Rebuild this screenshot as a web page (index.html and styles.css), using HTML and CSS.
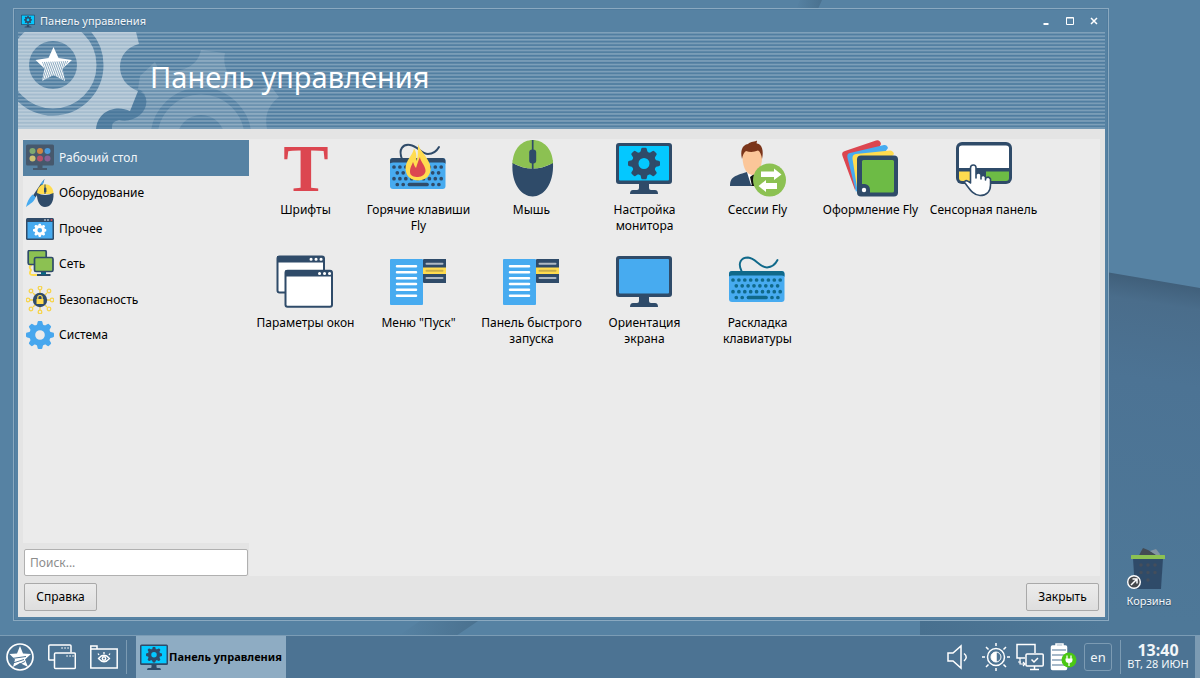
FILE: index.html
```html
<!DOCTYPE html>
<html lang="ru">
  <head>
    <meta charset="UTF-8" />
    <meta name="viewport" content="width=device-width, initial-scale=1.0" />
    <link rel="stylesheet" href="styles.css">
    <title>Панель управления</title>
  </head>
  <body>
    <!-- shared icon parts -->
    <svg class="defs" aria-hidden="true">
      <symbol id="gear" viewBox="-16 -16 32 32">
        <circle r="8.8" fill="none" stroke="currentColor" stroke-width="6.6" />
        <g fill="currentColor">
          <path id="teeth" d="M-4.5-10.5Q-3-12-2.8-14.5Q-2.6-16-1.5-16H1.5Q2.6-16 2.8-14.5Q3-12 4.5-10.5ZM-4.5 10.5Q-3 12-2.8 14.5Q-2.6 16-1.5 16H1.5Q2.6 16 2.8 14.5Q3 12 4.5 10.5Z" />
          <use href="#teeth" transform="rotate(45)" />
          <use href="#teeth" transform="rotate(90)" />
          <use href="#teeth" transform="rotate(135)" />
        </g>
      </symbol>
      <symbol id="monitor" viewBox="0 0 56 56">
        <rect y="3" width="56" height="41" rx="3" fill="#2f4b69" />
        <path d="M23 43H33V48Q33 50 35 50H39Q42 50 42 54H14Q14 50 17 50H21Q23 50 23 48Z" fill="#2f4b69" />
        <rect x="3" y="6" width="50" height="34.5" rx="1" fill="currentColor" />
      </symbol>
      <symbol id="monitor-gear" viewBox="0 0 56 56">
        <use href="#monitor" width="56" height="56" color="#04c8ff" />
        <use href="#gear" x="12" y="7.5" width="32" height="32" color="#2f4b69" />
      </symbol>
      <symbol id="keys" viewBox="0 0 56 56">
        <rect y="18" width="55.5" height="31" rx="3" fill="#47abf0" />
        <path d="M0 24V21Q0 18 3 18H52.500Q55.500 18 55.500 21V24Q55.500 22.500 53 22.500H3Q0 22.500 0 24Z" fill="currentColor" />
        <g fill="none" stroke="currentColor" stroke-width="3.7" stroke-linecap="round">
          <path d="M4 27H51.500M4 38.700H51.500" stroke-dasharray="0 5.900" />
          <path d="M7.300 32.800H49M7.300 44.500H14M43 44.500H49.500" stroke-dasharray="0 5.900" />
          <path d="M19.500 44.500H37" />
        </g>
      </symbol>
      <symbol id="menu" viewBox="0 0 56 56">
        <rect y="6" width="33" height="46" rx="1" fill="#47abf0" />
        <path d="M7 13.300H26M7 19.200H26M7 25.200H26M7 31H26M7 36.800H26M7 42.700H26" stroke="#fff" stroke-width="2.500" stroke-linecap="round" />
        <rect x="33" y="6" width="23.500" height="24" rx="1" fill="#2f4b69" />
        <rect x="33" y="14.500" width="23.500" height="6.500" fill="#ffdc4f" />
        <path d="M36.500 10.700H52.500M36.500 25H52.500" stroke="#aeb9c3" stroke-width="2" stroke-linecap="round" />
        <path d="M36.500 17.800H52.500" stroke="#c9ae4a" stroke-width="2" stroke-linecap="round" />
      </symbol>
    </svg>

    <div class="desktop">
      <svg class="wallpaper" viewBox="0 0 1200 678" preserveAspectRatio="none" aria-hidden="true">
        <defs>
          <linearGradient id="edge" gradientUnits="userSpaceOnUse" x1="1150" y1="279" x2="1100" y2="610">
            <stop offset="0" stop-color="#405f7a" />
            <stop offset="0.07" stop-color="#4a6d8b" />
            <stop offset="0.3" stop-color="#4c7394" />
            <stop offset="1" stop-color="#4e7898" />
          </linearGradient>
          <linearGradient id="fold">
            <stop offset="0" stop-color="#48708f" />
            <stop offset="1" stop-color="#4e7898" />
          </linearGradient>
          <linearGradient id="crease">
            <stop offset="0" stop-color="#4a718f" stop-opacity="0" />
            <stop offset="1" stop-color="#4a718f" />
          </linearGradient>
        </defs>
        <rect width="1200" height="678" fill="#5682a3" />
        <path d="M800 0H822L818 9H796Z" fill="url(#crease)" />
        <path d="M420 621H478L456 636H398Z" fill="url(#crease)" />
        <path d="M1100 271L1200 288V678H1100Z" fill="url(#edge)" />
        <path d="M920 610H1101V678H920Z" fill="url(#fold)" />
      </svg>

      <main class="window">
        <header class="titlebar">
          <svg class="titlebar-icon"><use href="#monitor-gear" /></svg>
          <span class="titlebar-text">Панель управления</span>
          <button class="title-button" aria-label="Свернуть">
            <svg viewBox="0 0 10 10"><path d="M2.500 8H7.500" stroke-width="2" /></svg>
          </button>
          <button class="title-button" aria-label="Развернуть">
            <svg viewBox="0 0 10 10"><path d="M1.500 1.500H8.500V8.500H1.500ZM1.500 2H8.500" /></svg>
          </button>
          <button class="title-button" aria-label="Закрыть окно">
            <svg viewBox="0 0 10 10"><path d="M2 2L8 8M8 2L2 8" stroke-width="1.500" /></svg>
          </button>
        </header>

        <div class="banner">
          <svg class="banner-art" aria-hidden="true">
            <defs>
              <pattern id="stripes" width="8" height="3.53" patternUnits="userSpaceOnUse">
                <rect y="0" width="8" height="1.500" fill="#8eacc2" fill-opacity="0.75" />
                <rect y="1.900" width="8" height="1" fill="#44749a" fill-opacity="0.4" />
              </pattern>
              <pattern id="hatch" width="2" height="8" patternUnits="userSpaceOnUse" patternTransform="rotate(-20)">
                <rect width="0.700" height="8" fill="#5682a3" />
              </pattern>
              <mask id="front-mask">
                <rect width="300" height="97" fill="#fff" />
                <circle cx="35" cy="33" r="47" fill="none" stroke="#000" stroke-width="7" />
                <circle cx="35" cy="33" r="24" fill="#000" />
              </mask>
              <mask id="back-mask">
                <rect width="300" height="97" fill="#fff" />
                <circle cx="183" cy="106" r="47" fill="none" stroke="#000" stroke-width="7" />
                <circle cx="183" cy="107" r="24" fill="#000" />
              </mask>
            </defs>
            <rect width="100%" height="100%" fill="url(#stripes)" />
            <!-- back gear -->
            <g mask="url(#back-mask)">
              <path d="M94 97C94 90 95 90 101 88C108 90 116 88 123 82C131 74 130 60 120 57L122 44L137 30L140 36C158 42 179 38 183 18L207 21C203 38 216 55 236 58C244 58 248 55 252 53L261 65C248 75 247 86 249 97Z" fill="#fff" fill-opacity="0.14" />
            </g>
            <!-- front gear with its shadow -->
            <path d="M120 59L112 79C100 73 80 77 78 97H94C94 90 95 90 101 88C108 90 116 88 123 82C131 74 130 62 120 59Z" fill="#46759a" fill-opacity="0.6" />
            <g mask="url(#front-mask)">
              <path d="M0 0H118L121 12C108 15 102 25 102 35C102 46 109 55 120 59L112 79C100 73 80 77 78 97H0Z" fill="#fff" fill-opacity="0.48" />
            </g>
            <path d="M35.500 15L40.500 26L54 28L44.500 36.500L47 49L35.500 43L24 49L26.500 36.500L17.500 28L30.500 26Z" fill="#fff" />
            <path d="M24 30L51 29L44.500 36.500L47 49L35.500 43L24 49L26.500 36.500Z" fill="url(#hatch)" />
          </svg>
          <h1>Панель управления</h1>
        </div>

        <div class="panel">
          <div class="columns">
            <aside class="sidebar">
              <nav class="categories">
                <button class="category selected">
                  <svg viewBox="0 0 28 28">
                    <rect y="0.500" width="28" height="21" rx="1.500" fill="#46586c" />
                    <path d="M11.500 21H16.500V24H21V26H7V24H11.500Z" fill="#46586c" />
                    <circle cx="6.500" cy="7" r="3" fill="#7fa970" /><circle cx="14" cy="7" r="3" fill="#cf8742" /><circle cx="21.500" cy="7" r="3" fill="#4b9ada" />
                    <circle cx="6.500" cy="14.500" r="3" fill="#cdc173" /><circle cx="14" cy="14.500" r="3" fill="#b75069" /><circle cx="21.500" cy="14.500" r="3" fill="#885f95" />
                  </svg>
                  Рабочий стол
                </button>
                <button class="category">
                  <svg viewBox="0 0 28 28">
                    <path d="M18.500 0L16 8L9.500 18.500L7 16.500L14 6Z" fill="#2f4b69" />
                    <path d="M18.500 0L16.500 6L14.500 5Z" fill="#47abf0" />
                    <path d="M6.500 15.500L9.500 18C9 22 4 25 0 28C1 23 3 19 6.500 15.500Z" fill="#47abf0" />
                    <path d="M11 15C11 2 27.500 2 27.500 15Z" fill="#ffdc4f" />
                    <path d="M11 14Q19 18 27.500 14C28 24 24 28 19 28S10.500 22 11 14Z" fill="#2f4b69" />
                    <path d="M19 5.500V15" stroke="#2f4b69" /><rect x="18" y="8.500" width="2.400" height="5" rx="1.200" fill="#2f4b69" />
                  </svg>
                  Оборудование
                </button>
                <button class="category">
                  <svg viewBox="0 0 28 28">
                    <rect y="3" width="28" height="22" rx="1.500" fill="#2f4b69" />
                    <rect x="1.500" y="7" width="25" height="16.500" fill="#47abf0" />
                    <circle cx="19" cy="5" r="0.800" fill="#fff" /><circle cx="22" cy="5" r="0.800" fill="#fff" /><circle cx="25.500" cy="5" r="0.900" fill="#dc4650" />
                    <use href="#gear" x="7" y="8.500" width="13.500" height="13.500" color="#fff" />
                  </svg>
                  Прочее
                </button>
                <button class="category">
                  <svg viewBox="0 0 28 28">
                    <path d="M6 15Q2 16 5 20Q2 25 7 25H13" fill="none" stroke="#ffdc4f" stroke-width="2" />
                    <rect x="2.200" y="0.500" width="18" height="14" rx="1.500" fill="#8cc152" stroke="#2f4b69" stroke-width="1.700" />
                    <rect x="8.500" y="7.500" width="18.500" height="14" rx="1.500" fill="#8cc152" stroke="#2f4b69" stroke-width="1.700" />
                    <path d="M15 22H20V24H24.500V26H11V24H15Z" fill="#2f4b69" />
                    <path d="M15 22.500H20V24.500H15Z" fill="#006a88" />
                  </svg>
                  Сеть
                </button>
                <button class="category">
                  <svg viewBox="0 0 28 28">
                    <g fill="none" stroke="#f6d44d" stroke-width="1.300">
                      <path d="M14 4V24M4 14H24M7 7L21 21M21 7L7 21" />
                      <g fill="#ebebeb">
                        <circle cx="14" cy="2" r="1.800" /><circle cx="14" cy="26" r="1.800" /><circle cx="2" cy="14" r="1.800" /><circle cx="26" cy="14" r="1.800" />
                        <circle cx="5" cy="5" r="1.800" /><circle cx="23" cy="5" r="1.800" /><circle cx="5" cy="23" r="1.800" /><circle cx="23" cy="23" r="1.800" />
                      </g>
                    </g>
                    <circle cx="14" cy="14" r="7.200" fill="#2f4b69" />
                    <path d="M11.800 13V11.500Q11.800 9.500 14 9.500T16.200 11.500V13" fill="none" stroke="#ffdc4f" stroke-width="1.200" />
                    <rect x="10.500" y="13" width="7" height="5" rx="0.500" fill="#ffdc4f" />
                  </svg>
                  Безопасность
                </button>
                <button class="category">
                  <svg color="#47a7ee"><use href="#gear" /></svg>
                  Система
                </button>
              </nav>
              <input class="search" type="text" placeholder="Поиск..." aria-label="Поиск" />
            </aside>

            <section class="items">
              <button class="item">
                <svg viewBox="-1 0 56 56"><text class="serif-letter" x="28" y="51" text-anchor="middle">T</text></svg>
                <span>Шрифты</span>
              </button>
              <button class="item">
                <svg viewBox="0 0 56 56">
                  <path d="M12 19C8 9 13 4 20 5C28 6 31 14 38 14Q45 14 49 7" fill="none" stroke="#2f4b69" stroke-width="2" stroke-linecap="round" />
                  <use href="#keys" width="56" height="56" color="#2f4b69" />
                  <path d="M28.500 4C29 9 33 12 36 17C39 22 41 25 40.500 30C40 37 34 40.500 28 40.500S16 37 15.500 29C15.500 20 22 17 24 8.500C26 11 27 16 26 21C29 17 27 10 28.500 4Z" fill="#ffdc4f" />
                  <path d="M20 32C20 27 22 25 23 22C24 24 24 26 26 28C27 25 28 21 30 17C30 21 35 25 35.500 30C36 34 32 37 28 37S20 36 20 32Z" fill="#dc4650" />
                </svg>
                <span>Горячие клавиши Fly</span>
              </button>
              <button class="item">
                <svg viewBox="-1 0 56 56">
                  <path d="M8.500 24C9 -8 48.500 -8 49 24Z" fill="#8cc152" />
                  <path d="M8.500 23Q28.500 34 49 23C50 45 39 56.500 28.700 56.500S7 45 8.500 23Z" fill="#2f4b69" />
                  <path d="M8.700 20V23Q28.500 34 48.800 23V20Z" fill="#8cc152" />
                  <path d="M28.700 0V29" stroke="#2f4b69" stroke-width="1.700" />
                  <rect x="25.200" y="9.500" width="7" height="14" rx="3" fill="#2f4b69" />
                </svg>
                <span>Мышь</span>
              </button>
              <button class="item">
                <svg><use href="#monitor-gear" /></svg>
                <span>Настройка монитора</span>
              </button>
              <button class="item">
                <svg viewBox="-1 0 56 56">
                  <path d="M0 46C0 38 3 36 17 32L26 36L35 46Z" fill="#2f4b69" />
                  <path d="M16 29L21 45H27L26 30Z" fill="#fff" />
                  <path d="M20 37L24 34L26 46H22Z" fill="#111" />
                  <path d="M12.500 12Q22 6 32 12C33 26 29 34 22 35C15 34 12 25 12.500 12Z" fill="#fbc699" />
                  <path d="M12 19C10 11 12 5 18 4C21 1 25 2 27 0.500C27 3 26 3 27 3.500C32 4 34 11 32 19Q31 12 28 10.500Q22 13 16 11Q13 13 12 19Z" fill="#7b351a" />
                  <circle cx="39.500" cy="40" r="16.500" fill="#8cc152" />
                  <path d="M31 31.500H44V28.500L51.500 34.500L44 40V37H31ZM47 43H36V40L28.500 46L36 52V49H47Z" fill="#fff" />
                </svg>
                <span>Сессии Fly</span>
              </button>
              <button class="item">
                <svg viewBox="0 0 56 56">
                  <path d="M0.500 16Q-1 12 3 11L34 0.500Q38 -0.500 39 4L13 50Z" fill="#dc4650" />
                  <path d="M5.500 18Q4.500 13.500 8 13L42 5Q45 4.500 46 8L14 52Z" fill="#47abf0" />
                  <path d="M10.500 19Q10 14.500 14 14L48 10.500Q51 10.500 52 14L16 54Z" fill="#ffdc4f" />
                  <rect x="15" y="15.500" width="41" height="41" rx="4" fill="#2f4b69" />
                  <rect x="20" y="20" width="32" height="32.500" rx="1.500" fill="#6dbb45" />
                  <path d="M18 44H23Q28 45 28 50V54H18Z" fill="#2f4b69" />
                  <circle cx="22" cy="50" r="2.200" fill="#fff" />
                </svg>
                <span>Оформление Fly</span>
              </button>
              <button class="item">
                <svg viewBox="-1 0 56 56">
                  <rect y="2" width="56" height="42" rx="6" fill="#2f4b69" />
                  <path d="M3 8Q3 5.500 6 5.500H50Q53 5.500 53 8V28H3Z" fill="#fff" />
                  <path d="M3 31.500H18V41H6Q3 41 3 38Z" fill="#ffdc4f" />
                  <path d="M30 31.500H53V38Q53 41 50 41H30Z" fill="#6dbb45" />
                  <path d="M14.500 43V28Q14.500 25 17.300 25T20 28V38V34.500Q22.500 31.500 25 34.500V39V36.500Q27.500 34 29.500 37V40V38.500Q32.500 35.500 34.500 39V45C34.500 52 30 55.500 24 55.500C17 55.500 13 48 8.500 42.500Q9 38.500 14.500 43Z" fill="#fff" stroke="#2f4b69" stroke-width="1.600" stroke-linejoin="round" />
                </svg>
                <span>Сенсорная панель</span>
              </button>
              <button class="item">
                <svg viewBox="0 0 56 56">
                  <rect x="0.500" y="3.500" width="46.500" height="36" rx="2" fill="#fff" stroke="#2f4b69" stroke-width="2" />
                  <path d="M0 3H47V9.500H0Z" fill="#2f4b69" />
                  <path d="M34 6.300H34.100M39 6.300H39.100M44 6.300H44.100" stroke="#fff" stroke-width="3" stroke-linecap="round" />
                  <rect x="8.500" y="17.800" width="46.500" height="36" rx="2" fill="#fff" stroke="#2f4b69" stroke-width="2" />
                  <path d="M8 17.500H55V23.500H8Z" fill="#2f4b69" />
                  <path d="M42.500 20.500H42.600M47.500 20.500H47.600M52.500 20.500H52.600" stroke="#fff" stroke-width="3" stroke-linecap="round" />
                </svg>
                <span>Параметры окон</span>
              </button>
              <button class="item">
                <svg><use href="#menu" /></svg>
                <span>Меню "Пуск"</span>
              </button>
              <button class="item">
                <svg><use href="#menu" /></svg>
                <span>Панель быстрого запуска</span>
              </button>
              <button class="item">
                <svg color="#47abf0"><use href="#monitor" /></svg>
                <span>Ориентация экрана</span>
              </button>
              <button class="item">
                <svg viewBox="0 0 56 56">
                  <path d="M12.500 18C8.500 10 12 4.500 19 4.500C27 5 30 14.500 38 14.500Q45 14 48.500 7" fill="none" stroke="#10698a" stroke-width="1.900" stroke-linecap="round" />
                  <use href="#keys" width="56" height="56" color="#10698a" />
                </svg>
                <span>Раскладка клавиатуры</span>
              </button>
            </section>
          </div>

          <footer class="actions">
            <button class="action">Справка</button>
            <button class="action">Закрыть</button>
          </footer>
        </div>
      </main>

      <a class="shortcut" href="#">
        <svg viewBox="2 0 42 44">
          <path d="M12 10L17 1L22 3L34 10Z" fill="#444b54" />
          <path d="M24 4L30 2L34 7L33 10Z" fill="#8494a2" />
          <path d="M7 11H37L35 42H9Z" fill="#2f4b69" />
          <rect x="5" y="8" width="34" height="4" rx="0.500" fill="#8cc152" />
          <path d="M15 18H29.100M15 25.500H29.100M22 33H22.100" stroke="#444e5c" stroke-width="3.500" stroke-linecap="round" stroke-dasharray="0 7" />
          <circle cx="8" cy="35" r="6.300" fill="#45484c" stroke="#fff" stroke-width="1.400" />
          <path d="M5 38L10.500 32.500M6.500 32H11V36.500" fill="none" stroke="#fff" stroke-width="1.500" />
        </svg>
        Корзина
      </a>

      <div class="taskbar">
        <button class="launcher" aria-label="Пуск">
          <svg viewBox="0 0 28 28">
            <circle cx="14" cy="14" r="13" stroke-width="1.700" />
            <path d="M14 3L17 10.500L25 11L19 16.500L22 24L14 20L7 24L9 16.500L3.500 11L11 10.500Z" fill="#fff" stroke="none" />
            <path d="M6 15.500L20 13.500M7 20L18 16.500M12 22L19 18.500" stroke="#4c7393" stroke-width="1" />
          </svg>
        </button>
        <button class="launcher" aria-label="Свернуть все окна">
          <svg viewBox="0 0 28 28">
            <path d="M6 17H1.500Q0.800 17 0.800 16V3Q0.800 2 2 2H22Q23 2 23 3V9.500" />
            <path d="M14 5H14.100M17 5H17.100M20 5H20.100M19 13H19.100M22 13H22.100M25 13H25.100" stroke-linecap="round" />
            <rect x="6.500" y="10" width="20.800" height="15.500" rx="1" />
          </svg>
        </button>
        <button class="launcher" aria-label="Файлы">
          <svg viewBox="0 0 28 28">
            <path d="M0.800 25V3H7V6H27.200V25ZM1 6H7" />
            <path d="M8.500 15.500Q14 9 19.500 15.500Q14 22 8.500 15.500ZM9 12L8 10.500M14 11V9M19 12L20 10.500" stroke-width="1.300" />
            <circle cx="14" cy="15.500" r="1.700" />
          </svg>
        </button>
        <span class="divider"></span>
        <button class="task">
          <svg><use href="#monitor-gear" /></svg>
          Панель управления
        </button>

        <div class="tray">
          <button class="tray-button narrow" aria-label="Громкость">
            <svg viewBox="0 0 22 28">
              <path d="M1 10H6L14 3V25L6 18H1ZM17 10.500Q21.500 14 17 18" stroke-width="1.500" />
            </svg>
          </button>
          <button class="tray-button" aria-label="Яркость">
            <svg viewBox="0 0 28 28">
              <circle cx="14" cy="14" r="8.500" />
              <path d="M14 9A5 5 0 0 0 14 19Z" fill="#fff" stroke-width="1" /><path d="M14 9A5 5 0 0 1 14 19Z" stroke-width="1" />
              <path d="M14 0V3M14 25V28M0 14H3M25 14H28M4 4L6.500 6.500M21.500 21.500L24 24M24 4L21.500 6.500M6.500 21.500L4 24" />
            </svg>
          </button>
          <button class="tray-button" aria-label="Сеть">
            <svg viewBox="0 0 28 28">
              <path d="M9 15H1V1.500H19V10" /><path d="M4 15V21H9M2 19H5M7 19L9 21L7 23" stroke-width="1.200" />
              <rect x="10" y="11" width="17.200" height="12" rx="1" /><path d="M18.500 23V26M14 26.500H23M15.500 16.500L18 19L22 15" />
            </svg>
          </button>
          <button class="tray-button" aria-label="Батарея">
            <svg viewBox="0 0 28 28">
              <path d="M6 3V1H13V3" />
              <rect x="1.500" y="3" width="15" height="23.500" rx="1" fill="#fff" />
              <path d="M2 7H16M2 12H16M2 17H16M2 22H16" stroke="#4c7393" stroke-width="1.200" />
              <circle cx="19" cy="17" r="7.500" fill="#4bc813" stroke="none" />
              <path d="M15.500 15.500H22.500V17Q22.500 20 19 20T15.500 17Z" fill="#fff" stroke="none" />
              <path d="M17 12.500V16M21 12.500V16M19 19V23" stroke-width="1.300" />
            </svg>
          </button>
          <button class="layout">en</button>
        </div>
        <span class="divider"></span>
        <div class="clock">
          <time class="clock-time">13:40</time>
          <span class="clock-date">ВТ, 28 ИЮН</span>
        </div>
        <button class="show-desktop" aria-label="Показать рабочий стол"></button>
      </div>
    </div>
  </body>
</html>
```

FILE: styles.css
```css
* {
  box-sizing: border-box;
}

body {
  margin: 0;
  font-family: "Noto Sans", sans-serif;
  font-size: 12px;
  line-height: 16px;
  color: #000;
}

button,
input {
  font: inherit;
  color: inherit;
}

button {
  padding: 0;
  border: none;
  background: none;
}

svg {
  display: block;
  flex-shrink: 0;
}

h1 {
  margin: 0;
}

.defs {
  position: absolute;
  width: 0;
  height: 0;
}

.desktop {
  position: relative;
  display: flex;
  flex-direction: column;
  justify-content: flex-end;
  height: 100vh;
  overflow: hidden;
}

.wallpaper {
  position: absolute;
  inset: 0;
  width: 100%;
  height: 100%;
}

/* window */

.window {
  position: absolute;
  top: 8px;
  right: 91px;
  bottom: 57px;
  left: 13px;
  display: flex;
  flex-direction: column;
  padding: 0 3px 3px 4px;
  border: 1px solid #8aa9c0;
  background: #5682a3;
  box-shadow: inset 0 0 0 1px #4f7b9d;
}

.titlebar {
  display: flex;
  align-items: center;
  height: 23px;
  padding: 0 2px 0 3px;
  color: #f2f6f9;
}

.titlebar-icon {
  width: 14px;
  height: 14px;
}

.titlebar-text {
  flex: 1;
  margin-left: 5px;
  font-size: 11px;
  text-shadow: 0 1px 1px #3f6483;
}

.title-button {
  display: flex;
  justify-content: center;
  width: 18px;
  margin-left: 6px;
}

.title-button svg {
  width: 10px;
  height: 10px;
  fill: none;
  stroke: #fff;
}

.banner {
  position: relative;
  display: flex;
  align-items: center;
  height: 97px;
  padding-left: 132px;
}

.banner-art {
  position: absolute;
  inset: 0;
  width: 100%;
  height: 100%;
}

.banner h1 {
  position: relative;
  padding-bottom: 8px;
  font-size: 29px;
  font-weight: normal;
  line-height: 40px;
  color: #fff;
}

.panel {
  flex: 1;
  display: flex;
  flex-direction: column;
  min-height: 0;
  padding: 10px 5px 6px;
  background: #e4e4e4;
}

.columns {
  flex: 1;
  display: flex;
  min-height: 0;
}

.sidebar {
  display: flex;
  flex-direction: column;
  width: 226px;
}

.categories {
  flex: 1;
  display: grid;
  grid-template-rows: repeat(6, 1fr) 190px;
  background: #ebebeb;
  padding-top: 1px;
}

.category {
  display: flex;
  align-items: center;
  gap: 5px;
  padding-left: 3px;
  text-align: left;
}

.category svg {
  width: 28px;
  height: 28px;
}

.category.selected {
  background: #5682a3;
  color: #f2f6f9;
}

.search {
  height: 27px;
  margin: 6px 1px 0;
  padding: 0 5px;
  border: 1px solid #b0b0b0;
  border-radius: 2px;
  background: #fff;
}

.search::placeholder {
  color: #8c8c8c;
}

.items {
  flex: 1;
  display: grid;
  grid-template-columns: repeat(auto-fill, 113px);
  grid-auto-rows: 113px;
  align-content: start;
  background: #ebebeb;
}

.item {
  display: flex;
  flex-direction: column;
  align-items: center;
  gap: 6px;
  padding: 1px 2px 0;
}

.item svg {
  width: 56px;
  height: 56px;
  margin-right: 2px;
  overflow: visible;
}

.serif-letter {
  font-family: "Liberation Serif", serif;
  font-size: 68px;
  font-weight: bold;
  fill: #dc4650;
}

.actions {
  display: flex;
  justify-content: space-between;
  padding: 7px 1px 0;
}

.action {
  width: 73px;
  height: 28px;
  border: 1px solid #a9a9a9;
  border-radius: 2px;
  background: linear-gradient(#ececec, #dedede);
}

/* desktop shortcut */

.shortcut {
  position: absolute;
  right: 28px;
  bottom: 69px;
  display: flex;
  flex-direction: column;
  align-items: center;
  gap: 2px;
  font-size: 11px;
  color: #f2f6f9;
  text-decoration: none;
  text-shadow: 0 1px 1px #2d4a63;
}

.shortcut svg {
  width: 46px;
  height: 44px;
}

/* taskbar */

.taskbar {
  position: relative;
  display: flex;
  align-items: center;
  height: 43px;
  padding-left: 6px;
  border-top: 1px solid #7b9cb5;
  background: #4c7393;
  color: #f2f6f9;
}

.launcher {
  width: 28px;
  margin-right: 14px;
}

.launcher svg,
.tray-button svg {
  width: 100%;
  height: 28px;
  fill: none;
  stroke: #fff;
  stroke-width: 1.5;
}

.divider {
  width: 1px;
  height: 34px;
  background: #7c9bb3;
}

.launcher + .divider {
  margin: 0 9px 0 -6px;
}

.task {
  display: flex;
  align-items: center;
  gap: 1px;
  height: 100%;
  padding: 0 4px;
  background: #8eacc3;
  font-size: 11px;
  font-weight: bold;
  color: #000;
}

.task svg {
  width: 28px;
  height: 28px;
}

.tray {
  display: flex;
  gap: 6px;
  margin: 0 8px 0 auto;
}

.tray-button {
  width: 28px;
}

.tray-button.narrow {
  width: 22px;
  margin-right: 7px;
}

.layout {
  width: 28px;
  height: 28px;
  border: 1px solid #7c9bb3;
  border-radius: 3px;
  font-size: 13px;
}

.clock {
  display: flex;
  flex-direction: column;
  align-items: center;
  width: 74px;
}

.clock-time {
  font-size: 16px;
  font-weight: bold;
  line-height: 14px;
}

.clock-date {
  font-size: 11px;
  line-height: 14px;
}

.show-desktop {
  width: 5px;
  height: 100%;
  background: #7c9bb3;
}
```
